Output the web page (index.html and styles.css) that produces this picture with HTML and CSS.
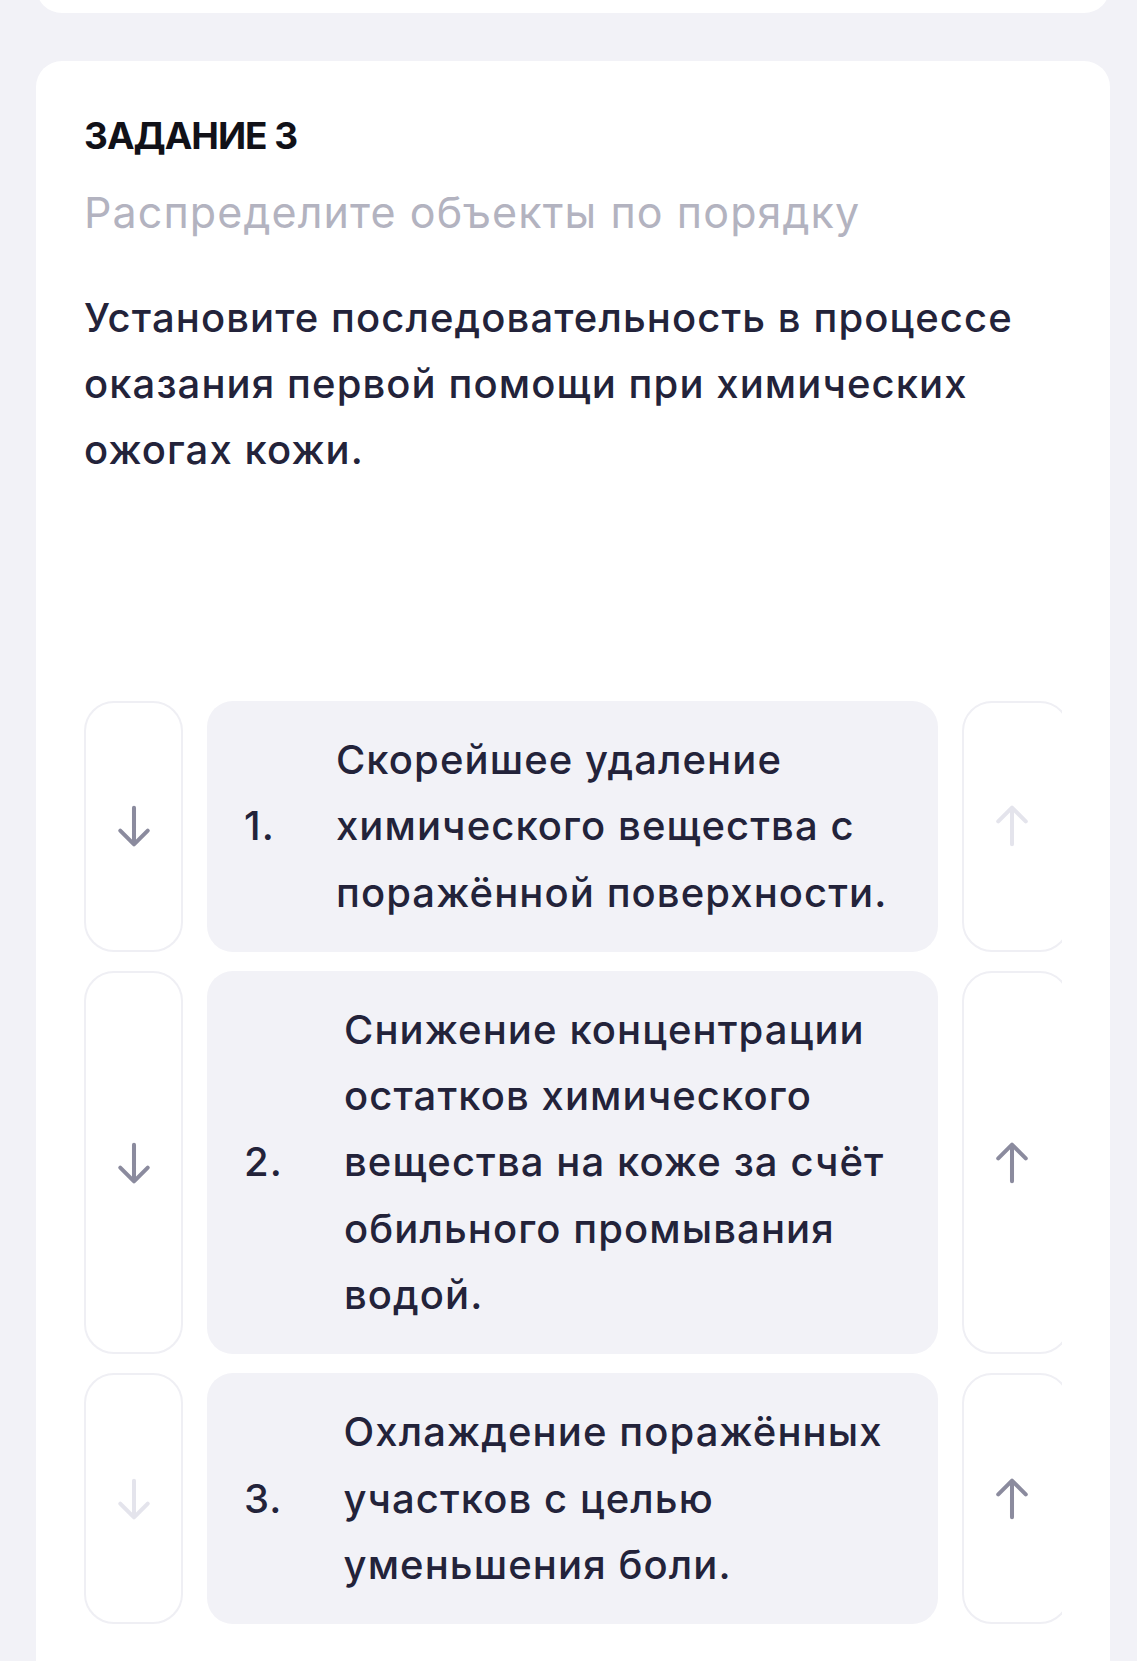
FILE: index.html
```html
<!DOCTYPE html>
<html lang="ru">
<head>
    <meta charset="UTF-8">
    <meta name="viewport" content="width=device-width, initial-scale=1.0">
    <title>Задание 3</title>
    <link rel="stylesheet" href="styles.css">
</head>
<body>
    <div class="panel panel-prev"></div>

    <div class="panel task">
        <h2 class="task-title">ЗАДАНИЕ 3</h2>
        <p class="task-type">Распределите объекты по порядку</p>
        <p class="task-text">Установите последовательность в процессе оказания первой помощи при химических ожогах кожи.</p>

        <div class="order-list">
            <div class="order-row">
                <button class="move-btn"><svg viewBox="0 0 24 24"><path d="M12 2v20M4.5 14.5L12 22l7.5-7.5"/></svg></button>
                <div class="order-item">
                    <span class="order-num">1.</span>
                    <span class="order-text">Скорейшее удаление химического вещества с поражённой поверхности.</span>
                </div>
                <button class="move-btn disabled"><svg viewBox="0 0 24 24"><path d="M12 22V2M4.5 9.5L12 2l7.5 7.5"/></svg></button>
            </div>

            <div class="order-row">
                <button class="move-btn"><svg viewBox="0 0 24 24"><path d="M12 2v20M4.5 14.5L12 22l7.5-7.5"/></svg></button>
                <div class="order-item">
                    <span class="order-num">2.</span>
                    <span class="order-text">Снижение концентрации остатков химического вещества на коже за счёт обильного промывания водой.</span>
                </div>
                <button class="move-btn"><svg viewBox="0 0 24 24"><path d="M12 22V2M4.5 9.5L12 2l7.5 7.5"/></svg></button>
            </div>

            <div class="order-row">
                <button class="move-btn disabled"><svg viewBox="0 0 24 24"><path d="M12 2v20M4.5 14.5L12 22l7.5-7.5"/></svg></button>
                <div class="order-item">
                    <span class="order-num">3.</span>
                    <span class="order-text">Охлаждение поражённых участков с целью уменьшения боли.</span>
                </div>
                <button class="move-btn"><svg viewBox="0 0 24 24"><path d="M12 22V2M4.5 9.5L12 2l7.5 7.5"/></svg></button>
            </div>
        </div>
    </div>
</body>
</html>
```

FILE: styles.css
```css
body {
    margin: 0;
    padding: 0 27px 0 36px;
    background-color: #f2f2f7;
    font-family: Inter, "Noto Sans", sans-serif;
    color: #23233a;
    overflow: hidden;
}

.panel {
    background-color: #fff;
    border-radius: 26px;
}

.panel-prev {
    height: 40px;
    margin-top: -27px;
    border-radius: 0 0 26px 26px;
}

.task {
    margin-top: 48px;
    padding: 55px 48px 200px;
}

.task-title {
    margin: 0;
    font-size: 37px;
    font-weight: 700;
    line-height: 40px;
    letter-spacing: -1px;
    color: #111118;
}

.task-type {
    margin: 32px 0 0;
    font-size: 43px;
    font-weight: 400;
    line-height: 48px;
    letter-spacing: 1.1px;
    color: #b3b3c0;
}

.task-text {
    margin: 49px 0 0;
    font-size: 40px;
    font-weight: 500;
    line-height: 66px;
    letter-spacing: 1.1px;
}

.order-list {
    margin-top: 218px;
    overflow: hidden;
    display: flex;
    flex-direction: column;
    gap: 19px;
}

.order-row {
    display: grid;
    grid-template-columns: 99px 1fr 108px;
    gap: 24px;
    margin-right: -8px;
}

.move-btn {
    display: flex;
    align-items: center;
    justify-content: center;
    background: #fff;
    border: 2px solid #efeff4;
    border-radius: 30px;
    padding: 0;
    color: #8b8b9e;
}

.move-btn.disabled {
    color: #e4e4ec;
}

.move-btn svg {
    width: 44px;
    height: 44px;
    fill: none;
    stroke: currentColor;
    stroke-width: 2.2;
    stroke-linecap: round;
    stroke-linejoin: round;
}

.order-row > .move-btn:last-child svg {
    margin-right: 8px;
}

.order-item {
    display: flex;
    align-items: center;
    gap: 61px;
    background-color: #f2f2f7;
    border-radius: 26px;
    padding: 26px 28px 26px 37px;
    font-size: 40px;
    font-weight: 500;
    line-height: 66.3px;
    letter-spacing: 1.1px;
}

.order-num {
    flex-shrink: 0;
}
```
